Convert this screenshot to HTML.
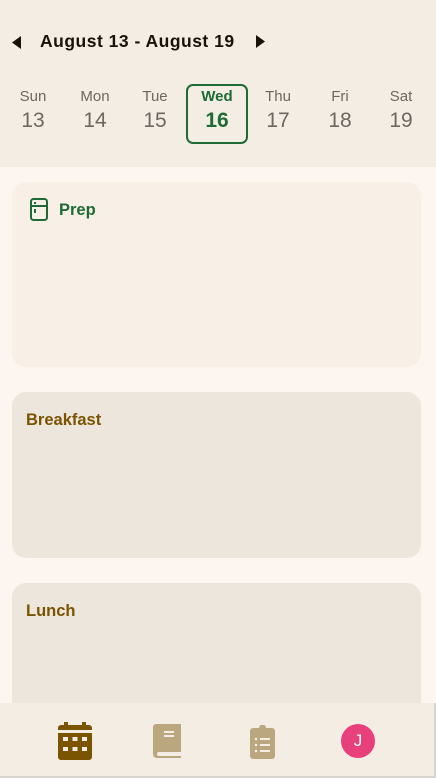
<!DOCTYPE html><html><head><style>
body{margin:0;width:436px;height:778px;overflow:hidden;background:#fdf6f0;font-family:"Liberation Sans",sans-serif;position:relative}
.hdr{position:absolute;left:0;top:0;width:436px;height:167px;background:#f3ede4}
.t{position:absolute;top:31px;left:40px;font-weight:bold;font-size:17.5px;color:#1a1208;letter-spacing:0.5px}
.day{position:absolute;top:88px;width:60px;text-align:center;color:#6e6660}
.day .n{font-size:15px}.day .d{font-size:21px;margin-top:4px}
.sel{position:absolute;left:186px;top:84px;width:58px;height:56px;border:2px solid #1e6b35;border-radius:7px}
.card{position:absolute;left:12px;width:409px;border-radius:14px}
.card h3{margin:0;position:absolute;left:14px;top:19px;font-size:16.5px;color:#7a5400}
.nav{position:absolute;left:0;top:703px;width:434px;height:73px;background:#f3ede4;border-right:2px solid #d8d4d0;border-bottom:2px solid #d8d4d0}
</style></head><body>
<div class="hdr"></div>
<svg style="position:absolute;left:12px;top:36px" width="10" height="13"><path d="M9 0V13L0 6.5Z" fill="#1a1208"/></svg>
<div class="t">August 13 - August 19</div>
<svg style="position:absolute;left:256px;top:35px" width="10" height="13"><path d="M0 0V13L9 6.5Z" fill="#1a1208"/></svg>
<div class="day" style="left:3px"><div class="n">Sun</div><div class="d">13</div></div>
<div class="day" style="left:65px"><div class="n">Mon</div><div class="d">14</div></div>
<div class="day" style="left:125px"><div class="n">Tue</div><div class="d">15</div></div>
<div class="sel"></div>
<div class="day" style="left:187px;color:#1e6b35;font-weight:bold"><div class="n">Wed</div><div class="d">16</div></div>
<div class="day" style="left:248px"><div class="n">Thu</div><div class="d">17</div></div>
<div class="day" style="left:310px"><div class="n">Fri</div><div class="d">18</div></div>
<div class="day" style="left:371px"><div class="n">Sat</div><div class="d">19</div></div>
<div class="card" style="top:182px;height:185px;background:#f8f0e7">
<svg style="position:absolute;left:18px;top:16px" width="18" height="23"><rect x="1" y="1" width="16" height="21" rx="2.5" fill="none" stroke="#1e6b35" stroke-width="2"/><path d="M1 8H17M5 4V6M5 11V15" stroke="#1e6b35" stroke-width="2"/></svg>
<h3 style="left:47px;color:#1e6b35">Prep</h3></div>
<div class="card" style="top:392px;height:166px;background:#ede6dd"><h3>Breakfast</h3></div>
<div class="card" style="top:583px;height:140px;background:#ede6dd"><h3>Lunch</h3></div>
<div class="nav">
<svg style="position:absolute;left:58px;top:19px" width="34" height="38"><path d="M6 0h4v5H6zM24 0h4v5h-4z" fill="#7a5400"/><rect x="0" y="3" width="34" height="35" rx="3" fill="#7a5400"/><rect x="0" y="8" width="34" height="3" fill="#f3ede4"/><g fill="#f3ede4"><rect x="5" y="15" width="5" height="4"/><rect x="14.5" y="15" width="5" height="4"/><rect x="24" y="15" width="5" height="4"/><rect x="5" y="25" width="5" height="4"/><rect x="14.5" y="25" width="5" height="4"/><rect x="24" y="25" width="5" height="4"/></g></svg>
<svg style="position:absolute;left:153px;top:21px" width="30" height="34"><path d="M3 0h25v28H6a2 2 0 0 0 0 4h22v2H4a4 4 0 0 1-4-4V3a3 3 0 0 1 3-3z" fill="#baa780"/><path d="M11 8h10M11 12h10" stroke="#f3ede4" stroke-width="2"/></svg>
<svg style="position:absolute;left:250px;top:22px" width="26" height="34"><rect x="0" y="3" width="25" height="31" rx="3" fill="#baa780"/><circle cx="12.5" cy="3" r="3.5" fill="#baa780"/><g fill="#f3ede4"><circle cx="6" cy="14" r="1.3"/><circle cx="6" cy="20" r="1.3"/><circle cx="6" cy="26" r="1.3"/><rect x="10" y="13" width="10" height="2"/><rect x="10" y="19" width="10" height="2"/><rect x="10" y="25" width="10" height="2"/></g></svg>
<div style="position:absolute;left:341px;top:21px;width:34px;height:34px;border-radius:50%;background:#e8407a;color:#fff;font-size:17px;text-align:center;line-height:34px">J</div>
</div>
</body></html>
